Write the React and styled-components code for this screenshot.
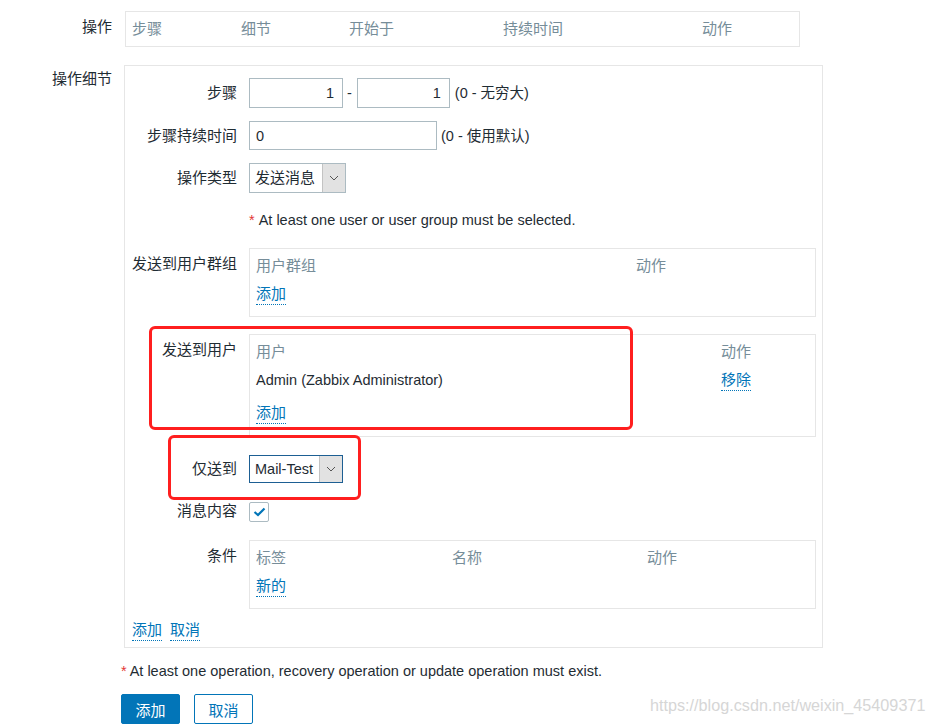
import React from 'react';
import styled, { createGlobalStyle } from 'styled-components';

const GlobalStyle = createGlobalStyle`
  html, body {
    margin: 0;
    padding: 0;
    background: #fff;
  }
  body {
    font-family: 'Liberation Sans', Arial, 'Noto Sans CJK SC', sans-serif;
    font-size: 14.5px;
    color: #1f2c33;
  }
  * {
    box-sizing: border-box;
  }
`;

const Page = styled.div`
  position: relative;
  width: 933px;
  height: 724px;
  overflow: hidden;
  padding-top: 11px;
`;

const OuterRow = styled.div`
  display: grid;
  grid-template-columns: 112px 1fr;
  column-gap: 12px;
  margin-top: ${p => p.$mt || 0}px;
`;

const OuterLabel = styled.div`
  text-align: right;
  font-size: 15px;
  padding-top: ${p => p.$pt || 0}px;
  line-height: 18px;
`;

const OpsTable = styled.div`
  margin-left: 1px;
  width: 675px;
  height: 36px;
  border: 1px solid #e6e6e6;
  display: grid;
  grid-template-columns: 109px 108px 154px 199px 1fr;
  align-items: center;
  padding-left: 6px;
  color: #768d99;
  font-size: 15px;
  line-height: 18px;
`;

const DetailsBox = styled.div`
  width: 699px;
  border: 1px solid #e6e6e6;
  padding: 12px 6px 6px 7px;
`;

const FormRow = styled.div`
  display: grid;
  grid-template-columns: 105px 1fr;
  column-gap: 12px;
  margin-top: ${p => p.$mt || 0}px;
`;

const Label = styled.div`
  text-align: right;
  font-size: 15px;
  line-height: 18px;
  padding-top: ${p => p.$pt || 0}px;
  white-space: nowrap;
`;

const Field = styled.div`
  display: flex;
  align-items: center;
  line-height: 18px;
`;

const TextInput = styled.div`
  width: ${p => p.$w}px;
  height: ${p => p.$h || 30}px;
  margin-left: ${p => p.$ml || 0}px;
  border: 1px solid #acbbc2;
  background: #fff;
  display: flex;
  align-items: center;
  justify-content: ${p => (p.$right ? 'flex-end' : 'flex-start')};
  padding: 0 8px 0 6px;
`;

const Hint = styled.span`
  margin-left: ${p => p.$ml || 0}px;
`;

const Select = styled.div`
  width: ${p => p.$w}px;
  height: ${p => p.$h}px;
  border: 1px solid ${p => (p.$focus ? '#1d5f93' : '#acbbc2')};
  display: flex;
  background: #fff;
`;

const SelectValue = styled.div`
  flex: 1;
  display: flex;
  align-items: center;
  padding-left: 5px;
  font-size: ${p => (p.$cjk ? 15 : 14.5)}px;
`;

const SelectArrow = styled.div`
  width: 23px;
  background: #e2e2e2;
  border-left: 1px solid #c3c3c3;
  display: flex;
  align-items: center;
  justify-content: center;
`;

const Required = styled.div`
  line-height: 22px;
  span {
    color: #e33734;
    margin-right: 4px;
  }
`;

const TableBox = styled.div`
  border: 1px solid #e6e6e6;
  height: ${p => p.$h}px;
  padding: 8px 6px 0 6px;
`;

const TableRow = styled.div`
  display: grid;
  grid-template-columns: ${p => p.$cols};
  height: ${p => p.$h || 28}px;
  line-height: 18px;
  font-size: ${p => (p.$head ? 15 : 14.5)}px;
  color: ${p => (p.$head ? '#768d99' : '#1f2c33')};
`;

const Link = styled.span`
  color: #0275b8;
  border-bottom: 1px dotted #0275b8;
  font-size: 15px;
  line-height: 18px;
  padding-bottom: 1px;
  justify-self: start;
  align-self: start;
  margin-right: ${p => p.$mr || 0}px;
`;

const Checkbox = styled.div`
  width: 20px;
  height: 20px;
  border: 1px solid #acbbc2;
  border-radius: 2px;
  display: flex;
  align-items: center;
  justify-content: center;
`;

const LinksRow = styled.div`
  margin-top: 12px;
  display: flex;
  line-height: 18px;
`;

const Footer = styled.div`
  padding-left: 121px;
  margin-top: 14px;
`;

const FooterNote = styled.div`
  line-height: 18px;
  span {
    color: #e33734;
    margin-right: 3px;
  }
`;

const Buttons = styled.div`
  display: flex;
  gap: 14px;
  margin-top: 14px;
`;

const Button = styled.div`
  width: 59px;
  height: 30px;
  border-radius: 2px;
  border: 1px solid #0275b8;
  background: ${p => (p.$primary ? '#0275b8' : '#fff')};
  color: ${p => (p.$primary ? '#fff' : '#0275b8')};
  font-size: 15px;
  display: flex;
  align-items: center;
  justify-content: center;
`;

const Annotation = styled.div`
  position: absolute;
  left: ${p => p.$x}px;
  top: ${p => p.$y}px;
  width: ${p => p.$w}px;
  height: ${p => p.$h}px;
  border: 3px solid #ff1f1f;
  border-radius: 6px;
  pointer-events: none;
`;

const Watermark = styled.div`
  position: absolute;
  left: 650px;
  top: 696px;
  font-size: 16.2px;
  color: #d6d6d6;
`;

const Chevron = () => (
  <svg width="10" height="6" viewBox="0 0 10 6">
    <polyline points="1,1 5,5 9,1" fill="none" stroke="#555" strokeWidth="1" />
  </svg>
);

const Check = () => (
  <svg width="13" height="10" viewBox="0 0 13 10">
    <polyline points="1.5,5 5,8 11.5,1.5" fill="none" stroke="#0275b8" strokeWidth="2.2" />
  </svg>
);

export default function App() {
  return (
    <Page>
      <GlobalStyle />
      <OuterRow>
        <OuterLabel $pt={7}>操作</OuterLabel>
        <OpsTable>
          <span>步骤</span>
          <span>细节</span>
          <span>开始于</span>
          <span>持续时间</span>
          <span>动作</span>
        </OpsTable>
      </OuterRow>

      <OuterRow $mt={18}>
        <OuterLabel $pt={5}>操作细节</OuterLabel>
        <DetailsBox>
          <FormRow>
            <Label $pt={6}>步骤</Label>
            <Field>
              <TextInput $w={94} $right>1</TextInput>
              <Hint $ml={4}>-</Hint>
              <TextInput $w={93} $ml={5} $right>1</TextInput>
              <Hint $ml={5}>(0 - 无穷大)</Hint>
            </Field>
          </FormRow>

          <FormRow $mt={13}>
            <Label $pt={6}>步骤持续时间</Label>
            <Field>
              <TextInput $w={188} $h={29}>0</TextInput>
              <Hint $ml={4}>(0 - 使用默认)</Hint>
            </Field>
          </FormRow>

          <FormRow $mt={13}>
            <Label $pt={6}>操作类型</Label>
            <Field>
              <Select $w={97} $h={30}>
                <SelectValue $cjk>发送消息</SelectValue>
                <SelectArrow><Chevron /></SelectArrow>
              </Select>
            </Field>
          </FormRow>

          <FormRow $mt={16}>
            <span />
            <Required><span>*</span>At least one user or user group must be selected.</Required>
          </FormRow>

          <FormRow $mt={17}>
            <Label $pt={7}>发送到用户群组</Label>
            <TableBox $h={69}>
              <TableRow $head $cols="380px 1fr">
                <span>用户群组</span>
                <span>动作</span>
              </TableRow>
              <TableRow $cols="1fr">
                <Link>添加</Link>
              </TableRow>
            </TableBox>
          </FormRow>

          <FormRow $mt={17}>
            <Label $pt={7}>发送到用户</Label>
            <TableBox $h={103}>
              <TableRow $head $cols="465px 1fr">
                <span>用户</span>
                <span>动作</span>
              </TableRow>
              <TableRow $cols="465px 1fr" $h={33}>
                <span>Admin (Zabbix Administrator)</span>
                <Link>移除</Link>
              </TableRow>
              <TableRow $cols="1fr">
                <Link>添加</Link>
              </TableRow>
            </TableBox>
          </FormRow>

          <FormRow $mt={18}>
            <Label $pt={5}>仅送到</Label>
            <Field>
              <Select $w={94} $h={28} $focus>
                <SelectValue>Mail-Test</SelectValue>
                <SelectArrow><Chevron /></SelectArrow>
              </Select>
            </Field>
          </FormRow>

          <FormRow $mt={19}>
            <Label $pt={0}>消息内容</Label>
            <Field>
              <Checkbox><Check /></Checkbox>
            </Field>
          </FormRow>

          <FormRow $mt={18}>
            <Label $pt={7}>条件</Label>
            <TableBox $h={69}>
              <TableRow $head $cols="196px 195px 1fr">
                <span>标签</span>
                <span>名称</span>
                <span>动作</span>
              </TableRow>
              <TableRow $cols="1fr">
                <Link>新的</Link>
              </TableRow>
            </TableBox>
          </FormRow>

          <LinksRow>
            <Link $mr={8}>添加</Link>
            <Link>取消</Link>
          </LinksRow>
        </DetailsBox>
      </OuterRow>

      <Footer>
        <FooterNote><span>*</span>At least one operation, recovery operation or update operation must exist.</FooterNote>
        <Buttons>
          <Button $primary>添加</Button>
          <Button>取消</Button>
        </Buttons>
      </Footer>

      <Annotation $x={149} $y={326} $w={484} $h={104} />
      <Annotation $x={168} $y={435} $w={193} $h={65} />
      <Watermark>https://blog.csdn.net/weixin_45409371</Watermark>
    </Page>
  );
}
